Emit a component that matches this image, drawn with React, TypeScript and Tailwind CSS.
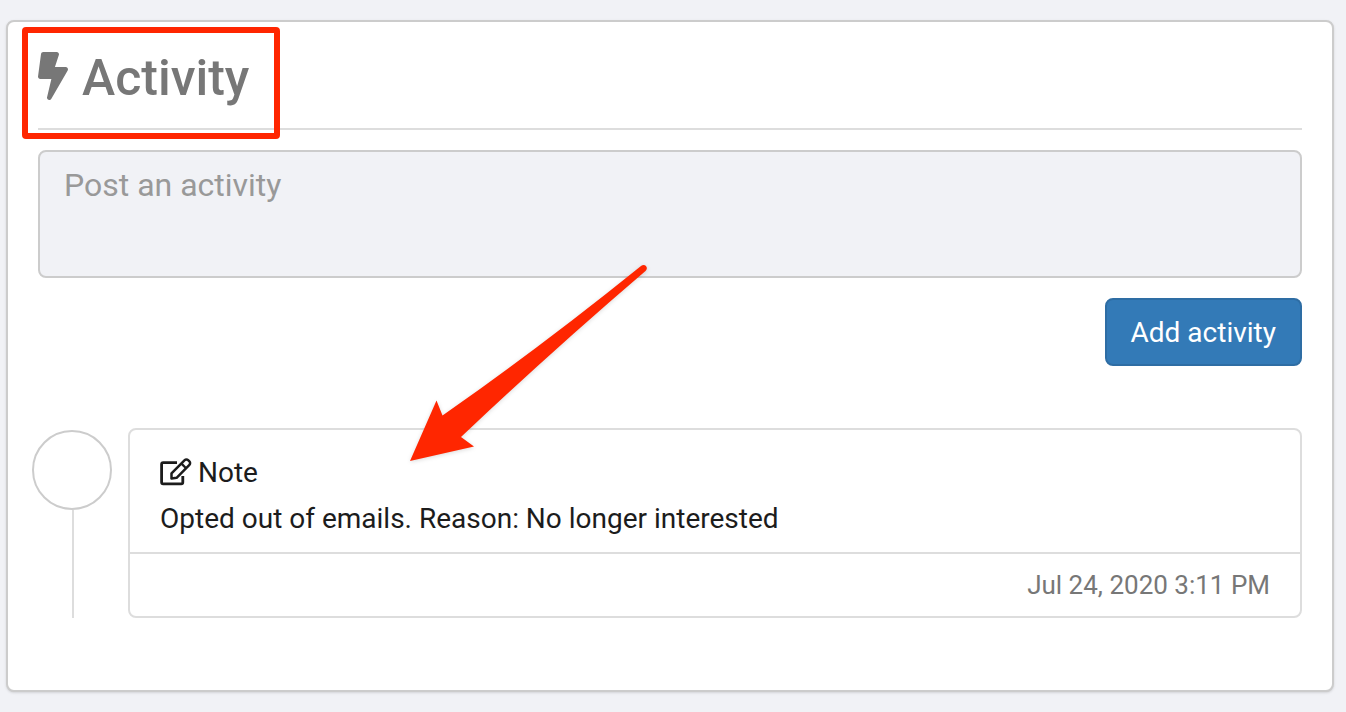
import React, { useState } from 'react';
import { FaBolt } from 'react-icons/fa';

interface ActivityItem {
  id: number;
  type: string;
  text: string;
  date: string;
}

const ACTIVITIES: ActivityItem[] = [
  {
    id: 1,
    type: 'Note',
    text: 'Opted out of emails. Reason: No longer interested',
    date: 'Jul 24, 2020 3:11 PM',
  },
];

function EditIcon({ className }: { className?: string }) {
  return (
    <svg
      className={className}
      viewBox="0 0 32 28"
      fill="none"
      stroke="currentColor"
      strokeWidth="2.8"
      strokeLinejoin="round"
      aria-hidden="true"
    >
      <path d="M17 4.600H3.200a1.600 1.600 0 0 0-1.600 1.600V24.200a1.600 1.600 0 0 0 1.600 1.600H21.200a1.600 1.600 0 0 0 1.600-1.600V18" />
      <path d="M11.500 20.500V15.400L24.700 2.100a2.400 2.400 0 0 1 3.400 0l1.300 1.300a2.400 2.400 0 0 1 0 3.400L16.600 19.800Z" strokeWidth="2.500" />
      <path d="m21.500 5.600 4.600 4.600" strokeWidth="2.300" />
    </svg>
  );
}

function ActivityEntry({ item }: { item: ActivityItem }) {
  return (
    <li className="flex gap-4">
      {/* Timeline marker */}
      <div className="-ml-1.5 mt-0.5 flex w-20 shrink-0 flex-col items-center">
        <div className="size-20 rounded-full border-2 border-[#cccccc] bg-white" />
        <div className="ml-0.5 w-0.5 flex-1 bg-[#dddddd]" />
      </div>

      <article className="min-w-0 flex-1 rounded-lg border-2 border-[#dddddd] bg-white">
        <div className="px-[30px] pt-[22px] pb-3 text-[28px] leading-[42px] text-[#1c1c1c]">
          <h3 className="mb-1 flex items-start gap-1.5">
            <EditIcon className="mt-1.5 h-7 w-8" />
            {item.type}
          </h3>
          <p>{item.text}</p>
        </div>
        <footer className="border-t-2 border-[#dddddd] px-[30px] py-[11px] text-right text-[26px] leading-10 text-[#777777]">
          <time>{item.date}</time>
        </footer>
      </article>
    </li>
  );
}

export default function App() {
  const [draft, setDraft] = useState('');

  return (
    <div className="min-h-screen bg-[#f1f2f6] pt-5 pr-3 pb-5 pl-1.5 font-['Roboto',sans-serif]">
      <main className="relative rounded-lg border-2 border-[#cccccc] bg-white px-[30px] pt-[30px] pb-[72px] shadow-sm">
        <h2 className="flex items-start gap-3.5 border-b-2 border-[#dddddd] pb-6 text-[50px] leading-[52px] font-medium text-[#777777]">
          <FaBolt className="h-12 w-[30px]" />
          Activity
        </h2>

        <form onSubmit={(e) => e.preventDefault()} className="mt-5 flex flex-col items-end gap-5">
          <textarea
            aria-label="Post an activity"
            placeholder="Post an activity"
            value={draft}
            onChange={(e) => setDraft(e.target.value)}
            className="block h-32 w-full resize-none rounded-lg border-2 border-[#cccccc] bg-[#f1f2f6] px-6 pt-3 text-[32px] leading-[42px] text-[#1c1c1c] outline-none placeholder:text-[#999999]"
          />
          <button
            type="submit"
            className="rounded-lg border-2 border-[#2e6da4] bg-[#337ab7] px-6 pt-3 pb-2.5 text-[28px] leading-[42px] text-white"
          >
            Add activity
          </button>
        </form>

        <ul className="mt-[62px]">
          {ACTIVITIES.map((item) => (
            <ActivityEntry key={item.id} item={item} />
          ))}
        </ul>

        {/* Callouts */}
        <div className="pointer-events-none absolute top-[5px] left-3.5 h-28 w-[258px] rounded-sm border-6 border-[#ff2600]" />
        <svg
          className="pointer-events-none absolute top-[238px] left-[392px] h-[210px] w-[260px] drop-shadow-sm"
          viewBox="400 260 260 210"
          fill="#ff2600"
          aria-hidden="true"
        >
          <path d="M410 461 436.500 400.500 442.500 415.500Q542 346 641 266C645 263 649 267.500 645.500 271Q553 350 461 437L474 446.500Z" />
        </svg>
      </main>
    </div>
  );
}
